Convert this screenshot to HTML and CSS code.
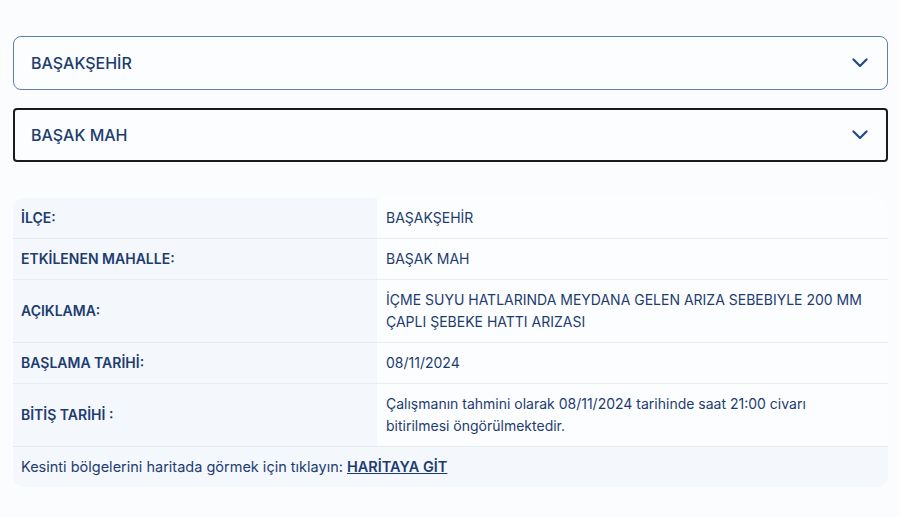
FILE: index.html
```html
<!DOCTYPE html>
<html lang="tr">
<head>
    <meta charset="UTF-8">
    <title>Arıza Kesinti Bilgisi</title>
    <link rel="stylesheet" href="styles.css">
</head>
<body>
    <div class="page">
        <div class="select select-district">
            <span>BAŞAKŞEHİR</span>
            <svg class="chevron" viewBox="0 0 16 10" width="16" height="10"><path d="M1.5 1.5 L8 8 L14.5 1.5" /></svg>
        </div>
        <div class="select select-focus">
            <span>BAŞAK MAH</span>
            <svg class="chevron" viewBox="0 0 16 10" width="16" height="10"><path d="M1.5 1.5 L8 8 L14.5 1.5" /></svg>
        </div>

        <div class="info">
            <table>
                <tr>
                    <th>İLÇE:</th>
                    <td>BAŞAKŞEHİR</td>
                </tr>
                <tr>
                    <th>ETKİLENEN MAHALLE:</th>
                    <td>BAŞAK MAH</td>
                </tr>
                <tr>
                    <th>AÇIKLAMA:</th>
                    <td>İÇME SUYU HATLARINDA MEYDANA GELEN ARIZA SEBEBIYLE 200 MM ÇAPLI ŞEBEKE HATTI ARIZASI</td>
                </tr>
                <tr>
                    <th>BAŞLAMA TARİHİ:</th>
                    <td>08/11/2024</td>
                </tr>
                <tr>
                    <th>BİTİŞ TARİHİ :</th>
                    <td>Çalışmanın tahmini olarak 08/11/2024 tarihinde saat 21:00 civarı bitirilmesi öngörülmektedir.</td>
                </tr>
                <tr class="footer">
                    <td colspan="2">Kesinti bölgelerini haritada görmek için tıklayın: <a href="#">HARİTAYA GİT</a></td>
                </tr>
            </table>
        </div>
    </div>
</body>
</html>
```

FILE: styles.css
```css
body {
    margin: 0;
    background: #fbfcfe;
    font-family: "Inter", "Noto Sans", sans-serif;
    color: #1d3c70;
}

.page {
    padding: 36px 12px 0 13px;
}

/* dropdowns */
.select {
    display: flex;
    align-items: center;
    justify-content: space-between;
    height: 54px;
    box-sizing: border-box;
    padding: 0 19px 0 17px;
    margin-bottom: 18px;
    border: 1px solid #5f7fb3;
    border-radius: 8px;
    background: #fcfdff;
    font-size: 16px;
    font-weight: 500;
}

.select-focus {
    border: 2px solid #1b1b1b;
    border-radius: 4px;
    padding-left: 16px;
    padding-right: 18px;
}

.chevron path {
    fill: none;
    stroke: #1d4a86;
    stroke-width: 2.2;
    stroke-linecap: round;
    stroke-linejoin: round;
}

/* info table */
.info {
    margin-top: 36px;
    border-radius: 12px;
    overflow: hidden;
    background: #f4f7fb;
}

table {
    width: 100%;
    border-collapse: collapse;
    font-size: 14px;
    line-height: 22px;
}

th, td {
    text-align: left;
    vertical-align: middle;
    padding: 9px 8px;
    border-bottom: 1px solid #e8ecf1;
}

th {
    width: 348px;
    font-weight: 600;
    background: #f4f7fb;
}

td {
    padding-left: 9px;
    padding-right: 18px;
    background: #fcfdfe;
}

tr.footer td {
    padding-left: 8px;
    font-size: 14.5px;
    background: #f4f7fb;
    border-bottom: none;
}

tr.footer a {
    color: #1d3c70;
    font-weight: 600;
}
```
